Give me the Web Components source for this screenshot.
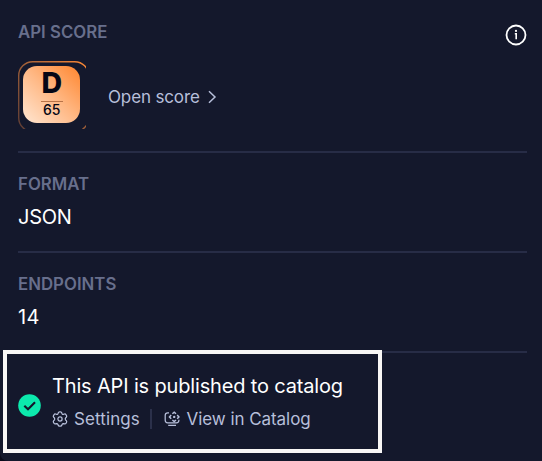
<!DOCTYPE html>
<html lang="en">
<head>
<meta charset="utf-8">
<title>API details</title>
<style>
html,body{margin:0;height:100%;background:#090a19;overflow:hidden}
body{font-family:Inter,"Liberation Sans",sans-serif;color:#fff}
</style>
</head>
<body>
<api-panel>
  <api-field label="API SCORE">
    <info-icon slot="action"></info-icon>
    <score-row><score-badge grade="D" score="65"></score-badge><score-link>Open score</score-link></score-row>
  </api-field>
  <api-field label="FORMAT"><field-value>JSON</field-value></api-field>
  <api-field label="ENDPOINTS"><field-value style="letter-spacing:.3px">14</field-value></api-field>
  <publish-status slot="status">
    This API is published to catalog
    <action-link slot="actions" icon="gear">Settings</action-link>
    <action-link slot="actions" icon="catalog">View in Catalog</action-link>
  </publish-status>
</api-panel>
<script>
const define = (name, markup) => customElements.define(name, class extends HTMLElement {
  constructor() {
    super();
    this.attachShadow({mode: 'open'}).innerHTML = markup(this);
  }
});

define('api-panel', () => `
<style>
:host{display:flex;flex-direction:column;box-sizing:border-box;width:542px;height:461px;background:#14182c;border-bottom-left-radius:8px;overflow:hidden}
.fields{display:flex;flex-direction:column;padding:0 15px 0 18px}
.status{margin:-3px 0 0 3px}
</style>
<div class="fields"><slot></slot></div>
<div class="status"><slot name="status"></slot></div>`);

define('api-field', el => `
<style>
:host{display:block;box-sizing:border-box;height:100px;padding-top:20px;border-bottom:2px solid #272c46}
:host(:first-child){height:153px;padding-top:21px}
header{display:flex;justify-content:space-between;height:22px;line-height:22px;font-size:16.8px;font-weight:600;color:#686f8c}
.label{letter-spacing:.03px}
</style>
<header><span class="label">${el.getAttribute('label')}</span><slot name="action"></slot></header>
<slot></slot>`);

define('field-value', () => `
<style>:host{display:block;font-size:20px;line-height:24px;padding-top:10px;letter-spacing:-.25px}</style><slot></slot>`);

define('info-icon', () => `
<style>:host{display:block;width:22px;height:22px;padding-top:3px}svg{display:block}</style>
<svg width="22" height="22" viewBox="0 0 22 22" fill="none" stroke="#fff"><circle cx="11" cy="11" r="9.5" stroke-width="1.8"/><path d="M9.8 9.7H11.2V15.2" stroke-width="1.6"/><circle cx="11" cy="6.9" r="1.1" fill="#fff" stroke="none"/></svg>`);

define('score-row', () => `
<style>:host{display:flex;align-items:center;gap:22px;margin-top:18px;height:68px}</style><slot></slot>`);

define('score-badge', el => `
<style>
:host{display:grid;width:68px;height:68px;flex:none;overflow:hidden}
svg,.face{grid-area:1/1}
.face{display:flex;flex-direction:column;align-items:center;box-sizing:border-box;width:57px;height:57px;margin:5px 0 0 5.3px;border-radius:14px;background:linear-gradient(45deg,#ffe6d2 0%,#ffb986 50%,#ff862f 100%);color:#050716}
b{font-size:28.5px;line-height:34px;font-weight:800}
i{width:22px;height:1px;margin-top:1px;background:#b87348}
span{font-size:14px;line-height:16px;font-weight:500}
</style>
<svg width="68" height="68" viewBox="0 0 68 68" fill="none"><defs><linearGradient id="g" x1="0" y1="1" x2="1" y2="0"><stop stop-color="#5b3b34"/><stop offset=".5" stop-color="#9e5e38"/><stop offset="1" stop-color="#ff8a35"/></linearGradient></defs><rect x=".7" y=".7" width="70" height="70" rx="14" stroke="url(#g)" stroke-width="1.4"/></svg>
<div class="face"><b>${el.getAttribute('grade')}</b><i></i><span>${el.getAttribute('score')}</span></div>`);

define('score-link', () => `
<style>:host{display:flex;align-items:center;gap:8px;font-size:17px;line-height:22px;color:#b7bfda;padding-top:3px;letter-spacing:-.14px}svg{display:block}</style>
<span><slot></slot></span><svg width="9" height="14" viewBox="0 0 9 14" fill="none" stroke="#b7bfda" stroke-width="1.5"><path d="M1 1.3L7 7L1 12.7"/></svg>`);

define('publish-status', () => `
<style>
:host{display:flex;align-items:center;box-sizing:border-box;width:379px;height:103px;border:4px solid #f8f6f5;background:#14182c;padding:1px 0 0 11px;gap:11px}
svg{display:block;margin-top:7px}
.title{font-size:20px;line-height:26px;letter-spacing:-.16px}
.actions{display:flex;margin-top:10px;height:22px}
</style>
<svg width="23" height="23" viewBox="0 0 23 23"><circle cx="11.5" cy="11.5" r="11.3" fill="#0ce9ad"/><path d="M6.3 11.7L10 15.2L17 8.2" fill="none" stroke="#14182c" stroke-width="2.2"/></svg>
<div><div class="title"><slot></slot></div><div class="actions"><slot name="actions"></slot></div></div>`);

const icons = {
  gear: '<path d="M6.1 2.2Q6.5.9 7.5.9H8.5Q9.5.9 9.9 2.2L10.2 3Q10.6 3.4 11.3 3.3L12.5 3Q13.5 2.8 14 3.7L14.5 4.6Q15 5.5 14.3 6.2L13.5 7Q13.1 7.8 13.5 8.8L14.3 9.7Q15 10.5 14.5 11.4L14 12.2Q13.5 13.1 12.5 12.9L11.3 12.6Q10.6 12.5 10.2 13.2L9.9 14Q9.5 15.1 8.5 15.1H7.5Q6.5 15.1 6.1 14L5.8 13.2Q5.4 12.5 4.7 12.6L3.5 12.9Q2.5 13.1 2 12.2L1.5 11.4Q1 10.5 1.7 9.7L2.5 8.8Q2.9 7.9 2.5 7L1.7 6.2Q1 5.5 1.5 4.6L2 3.7Q2.5 2.8 3.5 3L4.7 3.3Q5.4 3.4 5.8 3Z"/><circle cx="8" cy="8" r="2.1"/>',
  catalog: '<path d="M5 1.9H3.7Q1.2 1.9 1.2 4.4V9.3Q1.2 11.8 3.7 11.8H12.4Q14.9 11.8 14.9 9.3V8.8M4.2 14.3H12"/><path stroke-width="1.5" d="M8.4 2.8L10.2 1.2L12 2.8M13.2 4.1L14.9 5.9L13.2 7.7M12 9L10.2 10.6L8.4 9M7.2 7.7L5.5 5.9L7.2 4.1"/><circle cx="10.2" cy="5.9" r="1.2" fill="#b7bfda" stroke="none"/>'
};
define('action-link', el => `
<style>
:host{display:flex;align-items:center;gap:6px;height:20px;font-size:17px;line-height:20px;letter-spacing:.1px;color:#b7bfda;white-space:nowrap}
:host(:not(:last-child)){padding-right:10.5px;border-right:2px solid #2b304a}
:host(:last-child){padding-left:11.5px;gap:6.7px;letter-spacing:-.06px}
svg{display:block;flex:none}
</style>
<svg width="16" height="16" viewBox="0 0 16 16" fill="none" stroke="#b7bfda" stroke-width="1.25">${icons[el.getAttribute('icon')]}</svg><span><slot></slot></span>`);
</script>
</body>
</html>
